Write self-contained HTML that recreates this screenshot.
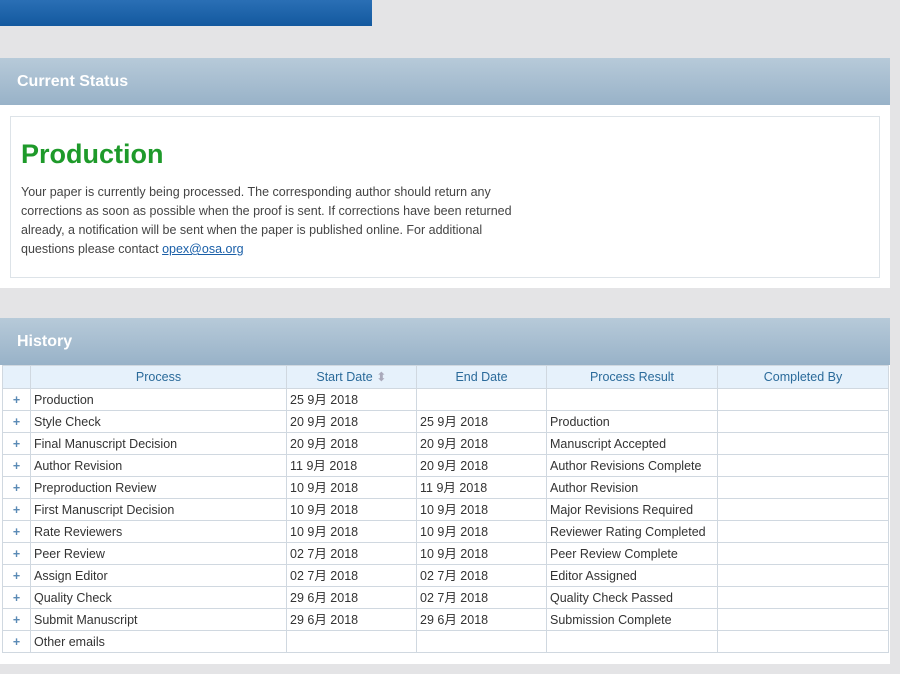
<!DOCTYPE html><html><head><meta charset="utf-8"><style>
body{margin:0;width:900px;height:674px;background:#e4e4e6;font-family:"Liberation Sans","Noto Sans CJK SC",sans-serif;position:relative;overflow:hidden;color:#333}
.top{position:absolute;left:0;top:0;width:372px;height:26px;background:linear-gradient(#2a6fb5,#13599f)}
.panel{position:absolute;left:0;width:890px;background:#fff}
.hd{height:47px;background:linear-gradient(#b7cad9,#98b2c8);color:#fff;font-weight:bold;font-size:16px;line-height:47px;padding-left:17px}
.inner{position:absolute;left:10px;top:58px;width:868px;height:160px;border:1px solid #dde3e8}
h1{margin:0;position:absolute;left:10px;top:22px;color:#1e9a2a;font-size:27px;font-weight:bold}
p{position:absolute;left:10px;top:66px;margin:0;width:505px;font-size:12.5px;line-height:19px;color:#444}
a{color:#1a5fa8}
table{position:absolute;left:2px;top:47px;border-collapse:collapse;font-size:12.5px;line-height:14px}
td,th{border:1px solid #d0d8e0;height:21px;padding:0 3px;white-space:nowrap;color:#333;vertical-align:middle}
th{background:#e6f1fb;color:#2a6a9a;font-weight:normal;height:22px}
td:first-child{color:#5a8ab5;text-align:center;font-weight:bold}
</style></head><body>
<div class="top"></div>
<div class="panel" style="top:58px;height:230px"><div class="hd">Current Status</div>
<div class="inner"><h1>Production</h1><p>Your paper is currently being processed. The corresponding author should return any corrections as soon as possible when the proof is sent. If corrections have been returned already, a notification will be sent when the paper is published online. For additional questions please contact <a href="#">opex@osa.org</a></p></div></div>
<div class="panel" style="top:318px;height:346px"><div class="hd">History</div>
<table>
<colgroup><col style="width:28px"><col style="width:256px"><col style="width:130px"><col style="width:130px"><col style="width:171px"><col style="width:171px"></colgroup>
<tr><th></th><th>Process</th><th>Start Date <span style="color:#aab">⬍</span></th><th>End Date</th><th>Process Result</th><th>Completed By</th></tr>
<tr><td>+</td><td>Production</td><td>25 9月 2018</td><td></td><td></td><td></td></tr>
<tr><td>+</td><td>Style Check</td><td>20 9月 2018</td><td>25 9月 2018</td><td>Production</td><td></td></tr>
<tr><td>+</td><td>Final Manuscript Decision</td><td>20 9月 2018</td><td>20 9月 2018</td><td>Manuscript Accepted</td><td></td></tr>
<tr><td>+</td><td>Author Revision</td><td>11 9月 2018</td><td>20 9月 2018</td><td>Author Revisions Complete</td><td></td></tr>
<tr><td>+</td><td>Preproduction Review</td><td>10 9月 2018</td><td>11 9月 2018</td><td>Author Revision</td><td></td></tr>
<tr><td>+</td><td>First Manuscript Decision</td><td>10 9月 2018</td><td>10 9月 2018</td><td>Major Revisions Required</td><td></td></tr>
<tr><td>+</td><td>Rate Reviewers</td><td>10 9月 2018</td><td>10 9月 2018</td><td>Reviewer Rating Completed</td><td></td></tr>
<tr><td>+</td><td>Peer Review</td><td>02 7月 2018</td><td>10 9月 2018</td><td>Peer Review Complete</td><td></td></tr>
<tr><td>+</td><td>Assign Editor</td><td>02 7月 2018</td><td>02 7月 2018</td><td>Editor Assigned</td><td></td></tr>
<tr><td>+</td><td>Quality Check</td><td>29 6月 2018</td><td>02 7月 2018</td><td>Quality Check Passed</td><td></td></tr>
<tr><td>+</td><td>Submit Manuscript</td><td>29 6月 2018</td><td>29 6月 2018</td><td>Submission Complete</td><td></td></tr>
<tr><td>+</td><td>Other emails</td><td></td><td></td><td></td><td></td></tr>
</table></div>
</body></html>
